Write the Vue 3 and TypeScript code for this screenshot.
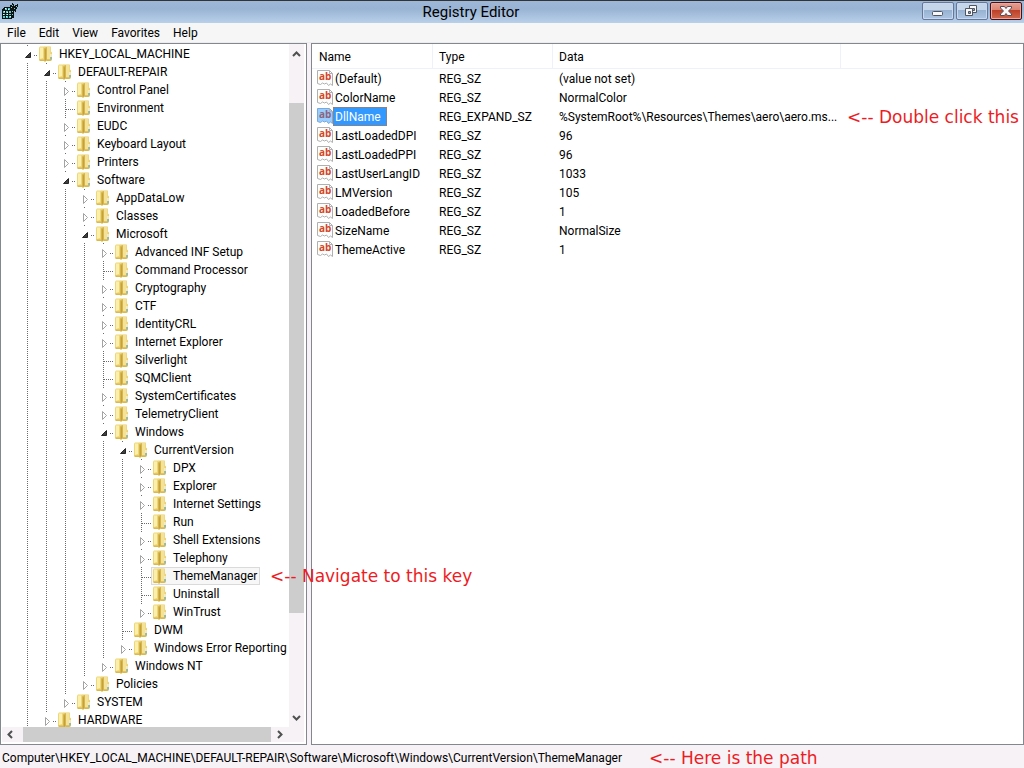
<script setup lang="ts">
import { ref } from 'vue'

type NodeState = 'open' | 'closed' | 'leaf'
interface TreeKey { level: number; name: string; state: NodeState }
interface RegValue { name: string; type: string; data: string; note?: string }

const key = (level: number, name: string, state: NodeState = 'closed'): TreeKey => ({ level, name, state })

const keys: TreeKey[] = [
  key(0, 'HKEY_LOCAL_MACHINE', 'open'),
  key(1, 'DEFAULT-REPAIR', 'open'),
  key(2, 'Control Panel'),
  key(2, 'Environment', 'leaf'),
  key(2, 'EUDC'),
  key(2, 'Keyboard Layout'),
  key(2, 'Printers'),
  key(2, 'Software', 'open'),
  key(3, 'AppDataLow'),
  key(3, 'Classes'),
  key(3, 'Microsoft', 'open'),
  key(4, 'Advanced INF Setup'),
  key(4, 'Command Processor', 'leaf'),
  key(4, 'Cryptography'),
  key(4, 'CTF'),
  key(4, 'IdentityCRL'),
  key(4, 'Internet Explorer'),
  key(4, 'Silverlight', 'leaf'),
  key(4, 'SQMClient', 'leaf'),
  key(4, 'SystemCertificates'),
  key(4, 'TelemetryClient'),
  key(4, 'Windows', 'open'),
  key(5, 'CurrentVersion', 'open'),
  key(6, 'DPX'),
  key(6, 'Explorer'),
  key(6, 'Internet Settings'),
  key(6, 'Run', 'leaf'),
  key(6, 'Shell Extensions'),
  key(6, 'Telephony'),
  key(6, 'ThemeManager', 'leaf'),
  key(6, 'Uninstall', 'leaf'),
  key(6, 'WinTrust'),
  key(5, 'DWM', 'leaf'),
  key(5, 'Windows Error Reporting'),
  key(4, 'Windows NT'),
  key(3, 'Policies'),
  key(2, 'SYSTEM'),
  key(1, 'HARDWARE'),
]

const values: RegValue[] = [
  { name: '(Default)', type: 'REG_SZ', data: '(value not set)' },
  { name: 'ColorName', type: 'REG_SZ', data: 'NormalColor' },
  { name: 'DllName', type: 'REG_EXPAND_SZ', data: '%SystemRoot%\\Resources\\Themes\\aero\\aero.ms...', note: '<-- Double click this' },
  { name: 'LastLoadedDPI', type: 'REG_SZ', data: '96' },
  { name: 'LastLoadedPPI', type: 'REG_SZ', data: '96' },
  { name: 'LastUserLangID', type: 'REG_SZ', data: '1033' },
  { name: 'LMVersion', type: 'REG_SZ', data: '105' },
  { name: 'LoadedBefore', type: 'REG_SZ', data: '1' },
  { name: 'SizeName', type: 'REG_SZ', data: 'NormalSize' },
  { name: 'ThemeActive', type: 'REG_SZ', data: '1' },
]

const menus = ['File', 'Edit', 'View', 'Favorites', 'Help']
const selectedKey = ref('ThemeManager')
const selectedValue = ref('DllName')
const path = 'Computer\\HKEY_LOCAL_MACHINE\\DEFAULT-REPAIR\\Software\\Microsoft\\Windows\\CurrentVersion\\ThemeManager'

const STEP = 19
const guideX = (level: number): number => 26 + STEP * level
</script>

<template>
  <div class="window">
    <header class="titlebar">
      <svg class="app-icon" width="18" height="18" viewBox="0 0 18 18" shape-rendering="crispEdges" aria-hidden="true">
        <path d="M3 5h7v1h3v10h-2v1H1V7h1V6h1z" fill="#111" />
        <path d="M4 6h2v2H4zM7 6h2v2H7zM2 9h2v2H2zM5 9h2v2H5zM8 9h2v2H8zM2 12h2v1H2zM5 12h2v1H5zM8 12h2v1H8zM2 14h2v2H2zM5 14h2v2H5zM8 14h2v2H8z" fill="#4fd0d0" />
        <path d="M4 6h1v1H4zM7 7h1v1H7zM3 9h1v1H3zM6 10h1v1H6zM2 12h1v1H2zM6 12h1v1H6zM5 14h1v1H5zM9 14h1v1H9z" fill="#d8ffff" />
        <path d="M9 3h2V2h2v2h1V3h3v2h-1v2h-1v2h-2v2h-2V8h-1V7H9z" fill="#111" />
        <path d="M11 3h1v1h-1zM15 4h1v1h-1zM13 6h1v1h-1zM11 12h1v1h-1zM11 9h1v1h-1zM10 5h1v1h-1z" fill="#5fdede" />
        <path d="M11 1h1v1h-1zM16 2h1v1h-1zM14 9h1v1h-1z" fill="#111" />
      </svg>
      <h1>Registry Editor</h1>
      <div class="caption-buttons">
        <button type="button" aria-label="Minimize">
          <svg width="30" height="16" viewBox="0 0 30 16"><rect x="9.5" y="8.5" width="10" height="4" rx="1" fill="#f8f8f8" stroke="#505560" /></svg>
        </button>
        <button type="button" aria-label="Restore">
          <svg width="30" height="16" viewBox="0 0 30 16" stroke="#505560" fill="#f8f8f8">
            <path d="M12.5 2.5h7v7h-7z" /><path d="M15.5 5.5h2v2h-2z" fill="#8fa9cb" />
            <path d="M8.5 5.5h7v7h-7z" /><path d="M11.5 8.5h2v2h-2z" fill="#8fa9cb" />
          </svg>
        </button>
        <button type="button" class="close" aria-label="Close">
          <svg width="30" height="16" viewBox="0 0 30 16"><path d="M9.5 3.5h4l1.500 2 1.500-2h4v1.500l-3 3 3 3v1.500h-4l-1.500-2-1.500 2h-4V11l3-3-3-3z" fill="#f8f8f8" stroke="#5b4a55" /></svg>
        </button>
      </div>
    </header>

    <nav class="menubar" aria-label="Menu">
      <button v-for="m in menus" :key="m" type="button">{{ m }}</button>
    </nav>

    <main class="panes">
      <section class="pane tree-pane" aria-label="Keys">
        <ul class="tree">
          <li v-for="k in keys" :key="k.name">
            <svg :width="guideX(k.level) + 9" height="18" shape-rendering="crispEdges" aria-hidden="true">
              <g stroke="#6a6a6a" stroke-dasharray="1 1">
                <line v-for="g in k.level" :key="g" :x1="guideX(g - 1) - 0.5" :x2="guideX(g - 1) - 0.5" y1="0" y2="18" />
                <line :x1="guideX(k.level) - 0.5" :x2="guideX(k.level) - 0.5" y1="0" :y2="k.state === 'leaf' ? 18 : 1" />
                <line :x1="guideX(k.level) + (k.state === 'leaf' ? 0 : 6)" :x2="guideX(k.level) + 9" y1="10.5" y2="10.5" />
              </g>
              <g :transform="`translate(${guideX(k.level)} 0)`" shape-rendering="geometricPrecision">
                <path v-if="k.state === 'closed'" d="M-1.500 6.500v8l4-4z" fill="#fff" stroke="#a3a3a3" />
                <path v-else-if="k.state === 'open'" d="M-2.500 12.500h5v-5z" fill="#404040" stroke="#262626" />
              </g>
            </svg>
            <button type="button" :class="{ selected: k.name === selectedKey }" @click="selectedKey = k.name">
              <svg width="14" height="16" viewBox="0 0 14 16" aria-hidden="true">
                <path d="M5 .5h6.500l.5.5v4.500l1 1V14l-1 1H5z" fill="#e9d06c" />
                <path d="M8 1h3.500v12H8z" fill="#f3e298" />
                <path d="M0 1.500L1 .5h4l1 1V15L1 15l-1-1z" fill="#eed778" />
                <path d="M1 1.500h3V12L1 13z" fill="#faefac" />
                <path d="M5 2.500l3-1.500v13l-2 2-1-1z" fill="#d6b64c" />
                <path d="M6 3.500l1-.5v11l-1 1z" fill="#c6a139" />
                <path d="M0 13.500h5V15H1zM8 13.500h4L11.500 15H8z" fill="#dcb94e" />
                <path d="M11.500 8h1v3h-1z" fill="#fff" />
                <path d="M11.500 11h1v2.500h-1z" fill="#4a9fd8" />
              </svg>
              <span>{{ k.name }}</span>
            </button>
          </li>
        </ul>
        <div class="vbar" aria-hidden="true">
          <svg width="15" height="17" viewBox="0 0 15 17"><path d="M4 12l3.500-3.500L11 12" fill="none" stroke="#505050" stroke-width="2" /></svg>
          <div class="track"><div class="thumb"></div></div>
          <svg width="15" height="17" viewBox="0 0 15 17"><path d="M4 6l3.500 3.500L11 6" fill="none" stroke="#505050" stroke-width="2" /></svg>
        </div>
        <div class="hbar" aria-hidden="true">
          <svg width="17" height="15" viewBox="0 0 17 15"><path d="M10 4L6.500 7.500 10 11" fill="none" stroke="#505050" stroke-width="2" /></svg>
          <div class="track"><div class="thumb"></div></div>
          <svg width="17" height="15" viewBox="0 0 17 15"><path d="M6 4l3.500 3.500L6 11" fill="none" stroke="#505050" stroke-width="2" /></svg>
        </div>
      </section>

      <section class="pane list-pane" aria-label="Values">
        <table>
          <colgroup><col class="c-name" /><col class="c-type" /><col class="c-data" /><col /></colgroup>
          <thead>
            <tr><th scope="col">Name</th><th scope="col">Type</th><th scope="col">Data</th><td></td></tr>
          </thead>
          <tbody>
            <tr v-for="v in values" :key="v.name" :class="{ selected: v.name === selectedValue }" @click="selectedValue = v.name">
              <td class="name">
                <div>
                  <svg width="16" height="17" viewBox="0 0 16 17" aria-hidden="true">
                    <path class="sheet" d="M.5 .5h12l3 3v12l-2-1.500-2 1.500-2-2.500-2 1-2-1-2 1.500-3-1z" fill="#fdfdfd" stroke="#b0b0b0" />
                    <path d="M12.5 .5v3h3" fill="none" stroke="#b0b0b0" />
                    <text x="2" y="10">ab</text>
                  </svg>
                  <span>{{ v.name }}</span>
                </div>
              </td>
              <td>{{ v.type }}</td>
              <td>{{ v.data }}</td>
              <td><span v-if="v.note" class="note">{{ v.note }}</span></td>
            </tr>
          </tbody>
        </table>
      </section>

      <p class="note key-note">&lt;-- Navigate to this key</p>
    </main>

    <footer class="statusbar">
      <span>{{ path }}</span>
      <span class="note">&lt;-- Here is the path</span>
    </footer>
  </div>
</template>

<style>
body { background: #f6f2f6; }
</style>

<style scoped>
* { box-sizing: border-box; }
.window {
  display: flex;
  flex-direction: column;
  height: 100vh;
  overflow: hidden;
  font: 12px/18px Roboto, "Liberation Sans", sans-serif;
  color: #000;
}
button { font: inherit; color: inherit; background: none; border: 0; padding: 0; margin: 0; }
svg { display: block; flex: none; }

.titlebar {
  display: flex;
  height: 23px;
  flex: none;
  border-top: 1px solid #333;
  background: linear-gradient(#9cb7d7, #98b3d3 35%, #b9d0ea);
}
.app-icon { margin: 1px; }
.titlebar h1 { flex: 1; margin: 0; font-size: 15px; line-height: 22px; font-weight: 400; text-align: center; }
.caption-buttons { display: flex; gap: 2px; padding: 1px 2px 0 0; }
.caption-buttons button {
  width: 32px;
  height: 18px;
  border: 1px solid #65779c;
  border-radius: 2px;
  box-shadow: inset 0 0 0 1px #c9d9ec;
  background: linear-gradient(#c5d5ea 0 45%, #97b1d2 45%, #adc6e2);
}
.caption-buttons .close {
  border-color: #471021;
  box-shadow: inset 0 0 0 1px #e9a99b;
  background: linear-gradient(#e6a091, #d98272 45%, #bd3f28 45%, #cf6a4d);
}

.menubar { display: flex; flex: none; height: 20px; padding-left: 1px; background: #f6f6f6; border-bottom: 1px solid #ececee; }
.menubar button { padding: 0 7px 0 6px; line-height: 20px; }

.panes { position: relative; flex: 1; min-height: 0; display: flex; gap: 4px; }
.pane { border: 1px solid #828790; background: #fff; }

.tree-pane {
  flex: none;
  width: 307px;
  display: grid;
  grid-template-columns: minmax(0, 1fr) 15px;
  grid-template-rows: minmax(0, 1fr) 15px;
  padding: 0 2px 2px 1px;
}
.tree { list-style: none; margin: 0; padding: 1px 0 0; overflow: hidden; }
.tree li { display: flex; height: 18px; white-space: nowrap; }
.tree button { display: flex; align-items: center; gap: 6px; height: 18px; padding: 0 2px 0 1px; border: 1px solid transparent; }
.tree button.selected { background: #f7f7f7; border-color: #dadada; }

.vbar, .hbar { display: flex; background: #f6f2f6; }
.vbar { flex-direction: column; }
.hbar { grid-column: 1 / -1; padding-right: 15px; }
.track { flex: 1; display: flex; }
.vbar .track { flex-direction: column; padding-top: 42px; }
.vbar .thumb { height: 84%; background: #cdcdcd; }
.hbar .track { padding: 0 1px 0 4px; }
.hbar .thumb { flex: 1; background: #cdcdcd; }

.list-pane { flex: 1; min-width: 0; overflow: hidden; }
table { width: 100%; table-layout: fixed; border-collapse: separate; border-spacing: 0; }
.c-name { width: 121px; }
.c-type { width: 120px; }
.c-data { width: 288px; }
th, td { padding: 0 0 0 6px; text-align: left; font-weight: 400; white-space: nowrap; }
thead th, thead td { height: 25px; padding-top: 2px; border-bottom: 1px solid #eef1fb; }
thead th { border-right: 1px solid #eef1fb; }
thead th:first-child { padding-left: 7px; }
tbody td { height: 19px; padding-top: 1px; line-height: 18px; }
tbody td.name { padding: 0 0 0 5px; }
.name div { display: flex; align-items: center; height: 19px; }
.name span { height: 19px; padding: 0 5px 0 1px; line-height: 18px; border: 1px solid transparent; }
.name text { font: 700 10px "Open Sans", sans-serif; fill: #d24726; }
.selected .name span { color: #fff; background: #3399ff; border: 1px dotted #c9722b; }
.selected .sheet { fill: #99ccff; stroke: #78a8dc; }
.selected .name text { fill: #8a6580; }

.note { font-family: "DejaVu Sans", sans-serif; font-size: 17px; color: #ed1c24; white-space: nowrap; }
td .note { display: block; height: 18px; line-height: 18px; }
.key-note { position: absolute; left: 270px; top: 520px; margin: 0; line-height: 26px; }

.statusbar { display: flex; align-items: center; gap: 27px; flex: none; height: 23px; padding: 2px 2px 0; white-space: nowrap; }
</style>
